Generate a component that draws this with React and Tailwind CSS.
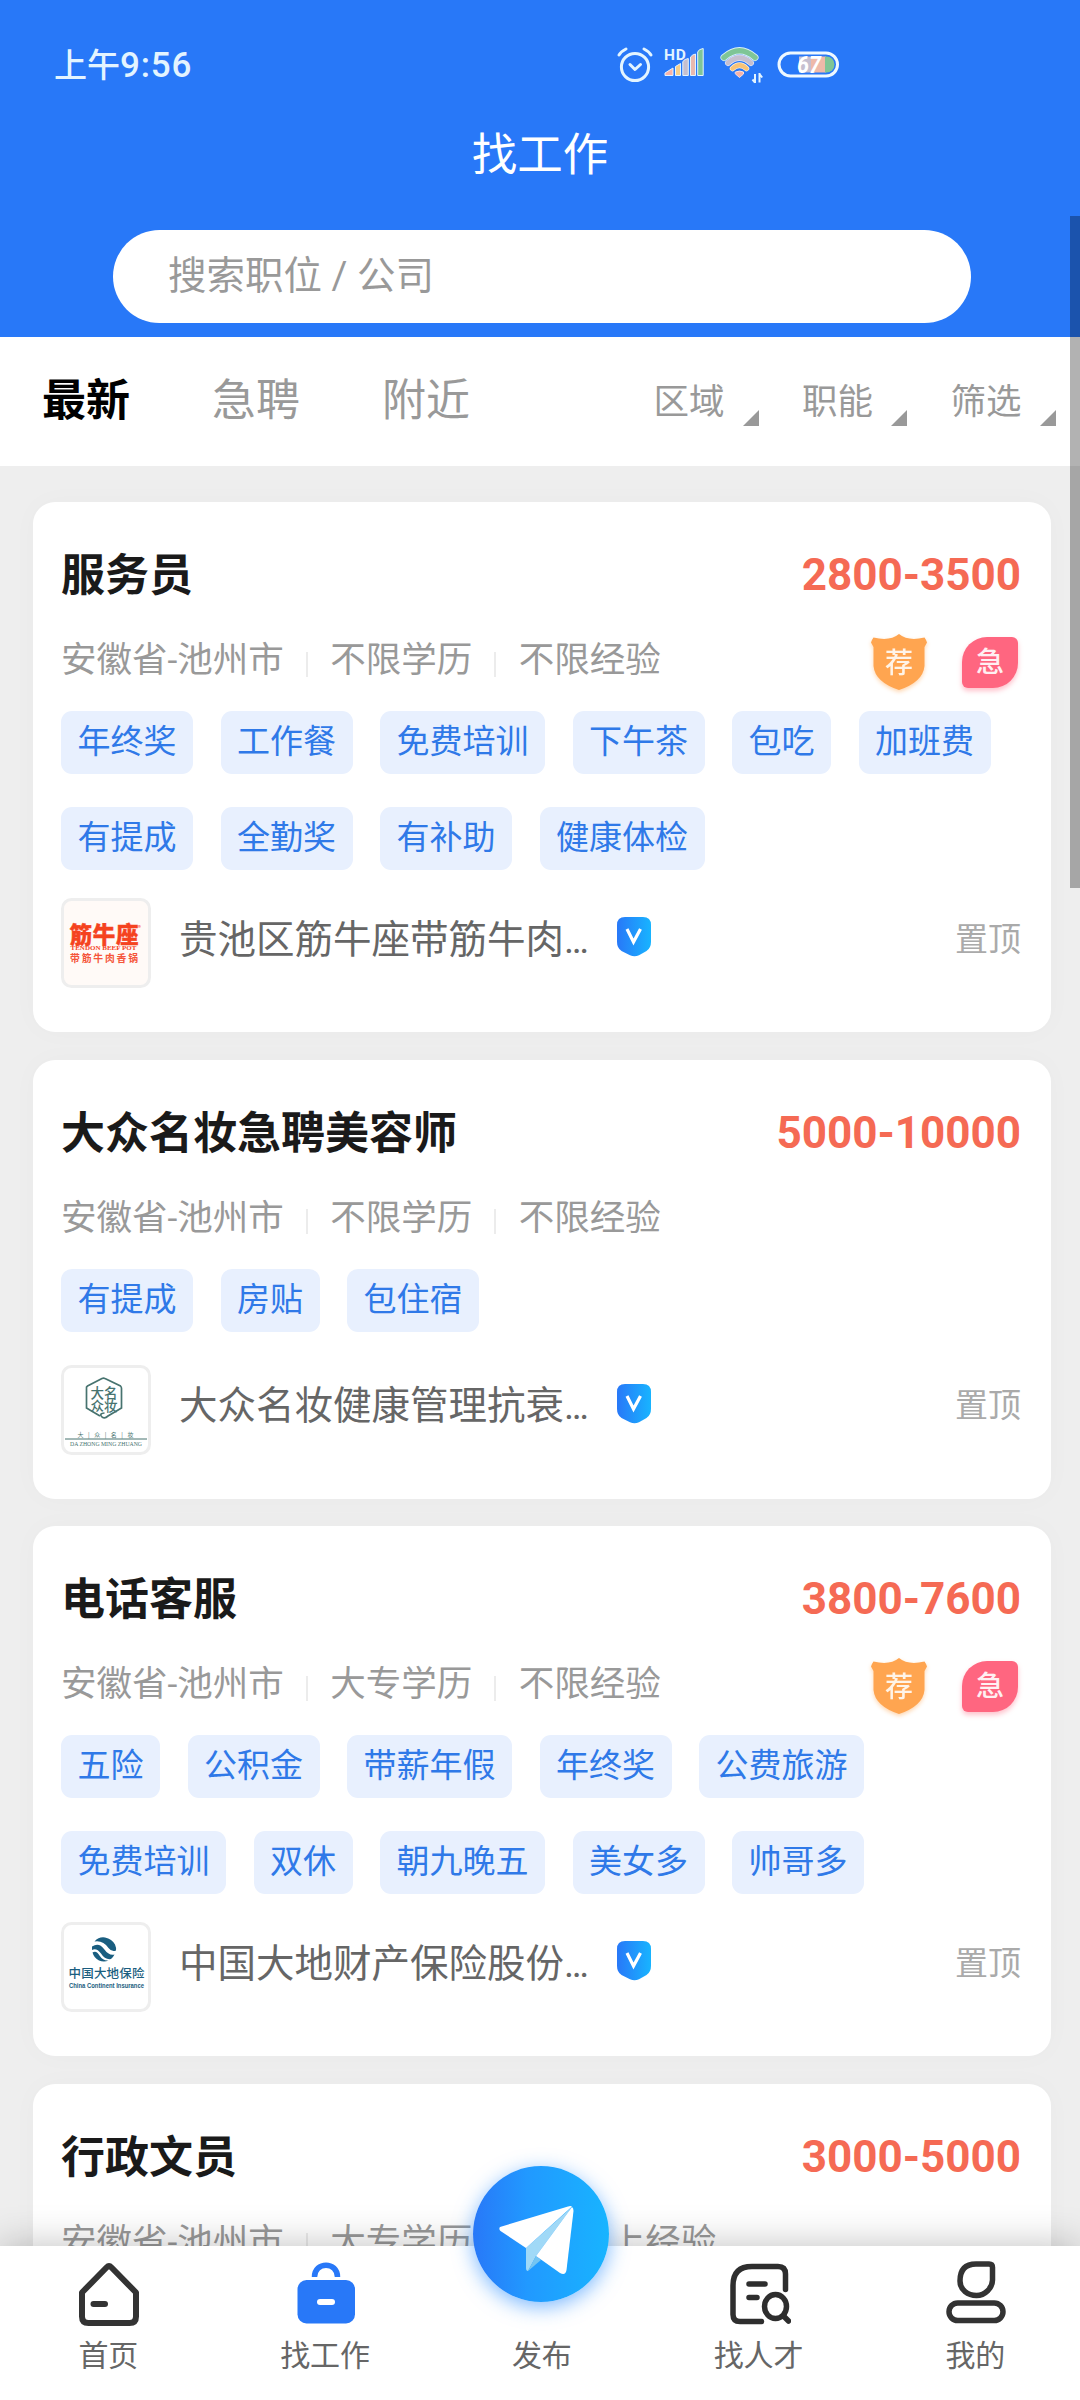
import React, { useState } from 'react';

const jobs = [
  {
    title: '服务员',
    salary: '2800-3500',
    meta: ['安徽省-池州市', '不限学历', '不限经验'],
    hot: true,
    tags: ['年终奖', '工作餐', '免费培训', '下午茶', '包吃', '加班费', '有提成', '全勤奖', '有补助', '健康体检'],
    company: '贵池区筋牛座带筋牛肉',
    logo: 'beef',
  },
  {
    title: '大众名妆急聘美容师',
    salary: '5000-10000',
    meta: ['安徽省-池州市', '不限学历', '不限经验'],
    hot: false,
    tags: ['有提成', '房贴', '包住宿'],
    company: '大众名妆健康管理抗衰',
    logo: 'beauty',
  },
  {
    title: '电话客服',
    salary: '3800-7600',
    meta: ['安徽省-池州市', '大专学历', '不限经验'],
    hot: true,
    tags: ['五险', '公积金', '带薪年假', '年终奖', '公费旅游', '免费培训', '双休', '朝九晚五', '美女多', '帅哥多'],
    company: '中国大地财产保险股份',
    logo: 'insurance',
  },
  {
    title: '行政文员',
    salary: '3000-5000',
    meta: ['安徽省-池州市', '大专学历', '1年以上经验'],
    hot: false,
    tags: [],
    company: '',
    logo: '',
  },
];

function StatusIcons() {
  return (
    <svg width="224" height="40" viewBox="0 0 224 40" fill="none">
      {/* alarm */}
      <g stroke="#e3f4ff" strokeWidth="3" strokeLinecap="round" strokeLinejoin="round">
        <circle cx="19" cy="22" r="13.6" />
        <path d="M14 19.500l5 5 5.500-5" />
        <path d="M3 10Q5 6.500 10 4M35 10Q33 6.500 28 4" />
      </g>
      {/* signal */}
      <g stroke="#e3f4ff" strokeWidth="1">
        <path d="M49 30.500v-2.500l8-5v7.500z" fill="#f9b3a8" />
        <path d="M59.500 30.500v-9l5-3v12z" fill="#f7cf8b" />
        <path d="M66.800 30.500v-14q2-2.500 5.500-3v17z" fill="#c6bfcf" />
        <path d="M74.500 30.500V12q2-2.500 5-3v21.500z" fill="#e9b9ae" />
        <path d="M81.700 30.500V7q1-3 5.500-3.500v27z" fill="#7fc596" />
      </g>
      <text x="48" y="15" fontSize="15.500" fontWeight="700" letterSpacing=".8" fill="#e3f4ff" className="font-[Roboto]">HD</text>
      {/* wifi */}
      <g strokeLinecap="round">
        <path d="M108 12.500Q123.500 -1 139 12.500" stroke="#d9f1f5" strokeWidth="7" />
        <path d="M108 12.500Q123.500 -1 139 12.500" stroke="#7fc596" strokeWidth="5.500" />
        <path d="M112 18Q123.500 7.500 135 18" stroke="#dfe6fa" strokeWidth="6" />
        <path d="M112 18Q123.500 7.500 135 18" stroke="#c6bfcf" strokeWidth="4.800" />
        <path d="M116.500 23.500Q123.500 17 130.500 23.500" stroke="#fff0d8" strokeWidth="5.500" />
        <path d="M116.500 23.500Q123.500 17 130.500 23.500" stroke="#f9c377" strokeWidth="4.200" />
        <path d="M119.500 27q4-2 8 0v2l-4 3.500-4-3.500z" fill="#f9b3a8" stroke="#fde3df" strokeWidth="1" />
      </g>
      <path d="M139.500 29.500v9M139.500 38l-2.500-3M144 38v-9.500M144 29.500l2.700 3.500" stroke="#e3f4ff" strokeWidth="2" transform="translate(-.5 -.5)" />
      {/* battery */}
      <rect x="163" y="8" width="58.500" height="23" rx="11.500" stroke="#eef8ff" strokeWidth="3" />
      <path d="M183 11.500h16v16h-16z" fill="#c6bfcf" />
      <path d="M195 11.500h15v16h-15z" fill="#eeb9a9" />
      <path d="M209 11.500h1.500a8 8 0 0 1 0 16H209z" fill="#7fc596" />
      <text x="181" y="27.500" fontSize="23" fontWeight="700" fontStyle="italic" fill="#fff" className="font-[Roboto]" textLength="24" lengthAdjust="spacingAndGlyphs">67</text>
    </svg>
  );
}

function RecommendBadge() {
  return (
    <svg width="64" height="64" viewBox="0 0 64 64" className="drop-shadow-[0_2px_2px_rgba(255,163,77,0.45)]">
      <path d="M32 4Q41 11.500 57.500 7.500Q59 9.500 60 12.500L57.500 17V36Q56 52 32 60Q8 52 6.500 36V17L4 12.500Q5 9.500 6.500 7.500Q23 11.500 32 4Z" fill="#ffa550" />
      <text x="32" y="43" textAnchor="middle" fontSize="28" fontWeight="500" fill="#fff4e8" className="font-['Noto_Sans_CJK_SC']">荐</text>
    </svg>
  );
}

function VerifyBadge() {
  return (
    <svg width="35" height="40" viewBox="0 0 35 40">
      <defs>
        <linearGradient id="verify" x1="0" y1="0" x2="1" y2="0">
          <stop offset="0" stopColor="#2878f8" />
          <stop offset="1" stopColor="#18b4ff" />
        </linearGradient>
      </defs>
      <path d="M8 0h18Q34 0 34 8v17q0 6-4.500 9l-7.500 4.200q-4.500 2-9 0L4.500 34Q0 31 0 25V8Q0 0 8 0Z" fill="url(#verify)" />
      <path d="M10 12l6.500 13L23.500 12" fill="none" stroke="#fff" strokeWidth="3.200" />
    </svg>
  );
}

function Logo({ name }) {
  if (name === 'beef') {
    return (
      <svg width="90" height="90" viewBox="0 0 90 90" className="block font-['Noto_Sans_CJK_SC']">
        <rect x="1.500" y="1.500" width="87" height="87" rx="9" fill="#fffaf7" stroke="#eee" strokeWidth="3" />
        <text x="8.500" y="44.500" fontSize="22.500" fontWeight="900" fill="#f5431f" stroke="#f5431f" strokeWidth=".4" textLength="69">筋牛座</text>
        <text x="77" y="32" fontSize="6" fill="#f5431f">®</text>
        <text x="9.500" y="52.300" fontSize="5.600" fontWeight="700" fill="#f5431f" textLength="66" lengthAdjust="spacingAndGlyphs" className="font-['Liberation_Serif']">TENDON BEEF POT</text>
        <text x="9" y="63.500" fontSize="9.800" fontWeight="700" fill="#f5553a" textLength="68">带筋牛肉香锅</text>
      </svg>
    );
  }
  if (name === 'beauty') {
    return (
      <svg width="90" height="90" viewBox="0 0 90 90" className="block font-['Noto_Sans_CJK_SC']" fill="#47736f">
        <rect x="1.500" y="1.500" width="87" height="87" rx="9" fill="#fff" stroke="#eee" strokeWidth="3" />
        <path d="M39 51L25.500 43V23.500Q25 22 26.500 21L41 13.500Q42.500 12.700 44 13.500L59.500 21Q60.500 22 60.500 23.500V43L47 51Q43 54.500 40.500 51.500T43.500 48" fill="none" stroke="#47736f" strokeWidth="1.700" />
        <g fontSize="13.500" fontWeight="500">
          <text x="29.500" y="33">大</text>
          <text x="43" y="33">名</text>
          <text x="29.500" y="46">众</text>
          <text x="43" y="46">妆</text>
        </g>
        <text x="16.500" y="71.500" fontSize="6" textLength="56">大|众|名|妆</text>
        <path d="M4 74h82" stroke="#47736f" strokeWidth="1" />
        <text x="9" y="80.500" fontSize="5.500" textLength="72" lengthAdjust="spacingAndGlyphs" className="font-['Liberation_Serif']">DA ZHONG MING ZHUANG</text>
      </svg>
    );
  }
  return (
    <svg width="90" height="90" viewBox="0 0 90 90" className="block font-['Noto_Sans_CJK_SC']" fill="#1a5e80">
      <rect x="1.500" y="1.500" width="87" height="87" rx="9" fill="#fff" stroke="#eee" strokeWidth="3" />
      <path d="M33.500 19.500Q38 14.500 44 15.500Q51 17 54 22.500Q55.500 26 55 28.500Q51 30.500 47.500 26Q42 18 33.500 19.500Z" />
      <path d="M31 24.500Q38 20 43 27Q48 34 53.500 32.500Q52 35.500 50 37Q44 38 40 31.500Q35.500 25.500 31 28Z" />
      <path d="M31.500 30.500Q35.500 28 38.500 33.500Q42 39 47.500 38.500Q43 40.500 38 38.500Q33 36 31.500 30.500Z" />
      <text x="7.500" y="56" fontSize="12.500" fontWeight="500" textLength="76">中国大地保险</text>
      <text x="8" y="66" fontSize="7" fontWeight="700" textLength="75" lengthAdjust="spacingAndGlyphs" className="font-['Liberation_Sans']">China Continent Insurance</text>
    </svg>
  );
}

function JobCard({ job }) {
  return (
    <div className="rounded-[22px] bg-white pt-[41px] pr-[30px] pb-[44px] pl-[28px] shadow-[0_0_28px_rgba(0,0,0,0.025)]">
      <div className="flex h-[66px] items-center justify-between">
        <h2 className="text-[44px] leading-[66px] font-bold text-[#1a1a1a]">{job.title}</h2>
        <span className="pb-[2px] text-[44px] leading-[64px] font-bold text-[#f56a54]">{job.salary}</span>
      </div>
      <div className="mt-[19px] flex h-[64px] items-center justify-between">
        <div className="flex items-center text-[35.500px] leading-[64px] text-[#999]">
          {job.meta.map((item, i) => (
            <React.Fragment key={item}>
              {i > 0 && <span className="mt-2 mr-[22.500px] ml-[22px] h-[25px] w-[2px] bg-[#ececec]" />}
              <span>{item}</span>
            </React.Fragment>
          ))}
        </div>
        {job.hot && (
          <div className="flex items-center pt-[4px]">
            <RecommendBadge />
            <span className="mr-[3px] ml-[31px] flex h-[51px] w-[56px] items-center justify-center rounded-tl-[25px] rounded-tr-[6px] rounded-br-[25px] rounded-bl-[6px] bg-[#ff6680] pt-[2px] text-[28px] font-medium text-[#fff0f2] shadow-[0_3px_5px_rgba(255,102,128,0.4)]">
              急
            </span>
          </div>
        )}
      </div>
      <div className="mt-[19px] flex min-h-[68px] flex-wrap content-start gap-x-[27.500px] gap-y-[33px]">
        {job.tags.map((tag) => (
          <span key={tag} className="h-[63px] rounded-[11px] bg-[#e8f0fe] px-[16.500px] text-[33px] leading-[61px] text-[#2f79e8]">
            {tag}
          </span>
        ))}
      </div>
      {job.company && (
        <div className="mt-[28px] flex h-[90px] items-center">
          <Logo name={job.logo} />
          <span className="mb-[7px] ml-[28px] w-[438px] text-[38.500px] leading-[82px] whitespace-nowrap text-[#666]">
            {job.company}
            <span className="tracking-[-2.500px]">...</span>
          </span>
          <span className="mb-[12px] shrink-0">
            <VerifyBadge />
          </span>
          <span className="mb-[7px] ml-auto text-[33px] text-[#aaa]">置顶</span>
        </div>
      )}
    </div>
  );
}

function HomeIcon() {
  return (
    <svg width="64" height="64" viewBox="0 0 64 64" fill="none" stroke="#333" strokeWidth="6" strokeLinecap="round" strokeLinejoin="round">
      <path d="M6 30.500L30.500 5.500Q33 3 35.500 5.500L60 30.500V54.500Q60 61 53.500 61H12.500Q6 61 6 54.500Z" />
      <path d="M17.500 42H29" />
    </svg>
  );
}

function BagIcon() {
  return (
    <svg width="64" height="64" viewBox="0 0 64 64" fill="none">
      <rect x="4.500" y="18" width="57.500" height="43.500" rx="9" fill="#2878f8" />
      <path d="M21.500 15C21.500 -.8 44.500 -.8 44.500 15" stroke="#2878f8" strokeWidth="5.500" />
      <path d="M27 40H39" stroke="#fff" strokeWidth="6" strokeLinecap="round" />
    </svg>
  );
}

function TalentIcon() {
  return (
    <svg width="64" height="64" viewBox="0 0 64 64" fill="none" stroke="#2e2e2e" strokeWidth="5.500" strokeLinecap="round" strokeLinejoin="round">
      <path d="M58.500 27.500V12Q58.500 4.500 51 4.500H25Q6 4.500 6 23.500V52.500Q6 59.500 13 59.500H34.500" />
      <path d="M22 22H38M22 35.500H30" />
      <ellipse cx="48.500" cy="44.500" rx="11" ry="12" />
      <path d="M57 54.500L61.500 59" />
    </svg>
  );
}

function MineIcon() {
  return (
    <svg width="64" height="64" viewBox="0 0 64 64" fill="none" stroke="#333" strokeWidth="5.500" strokeLinejoin="round" className="overflow-visible">
      <path d="M33 2H46Q49.500 2 49.500 5.500V18C49.500 26 42 33.500 33.500 33.500S17 28 17 19Q17 2 33 2Z" />
      <rect x="6" y="41" width="54" height="17.500" rx="8.700" />
    </svg>
  );
}

function SendIcon() {
  return (
    <svg width="136" height="136" viewBox="0 0 136 136" className="block">
      <defs>
        <linearGradient id="send" x1="0" y1="0" x2="1" y2="0">
          <stop offset="0" stopColor="#2878f8" />
          <stop offset=".4" stopColor="#2199ff" />
          <stop offset="1" stopColor="#18b4ff" />
        </linearGradient>
      </defs>
      <circle cx="68" cy="68" r="68" fill="url(#send)" />
      <path d="M53 82L99 41L63 90L55 105Q53 105 53 102Z" fill="#a0d9f7" />
      <path d="M55 105L63 90L68 94Z" fill="#74c5f2" />
      <path d="M27 61Q25.500 63 27.500 65L53 82L99 40.500Q97.500 39.500 95 40.500Z" fill="#fff" />
      <path d="M99 41L63 90L87 107Q92.500 110 93.500 104L100.500 45Q100.500 42 99 41Z" fill="#fff" />
    </svg>
  );
}

const navItems = [
  { label: '首页', icon: <HomeIcon /> },
  { label: '找工作', icon: <BagIcon /> },
  { label: '发布', icon: null },
  { label: '找人才', icon: <TalentIcon /> },
  { label: '我的', icon: <MineIcon /> },
];

function App() {
  const [tab, setTab] = useState('最新');

  return (
    <div className="relative h-[2400px] w-[1080px] overflow-hidden bg-[#eee] font-[Roboto,'Noto_Sans_CJK_SC',sans-serif]">
      <header className="h-[337px] bg-[#2878f8]">
        <div className="flex h-[110px] items-center pt-5 pl-[54px]">
          <span className="w-[562px] pt-[2px] text-[33px] font-medium text-[#e3f4ff]">
            上午<span className="text-[35px] tracking-[0.800px]">9:56</span>
          </span>
          <StatusIcons />
        </div>
        <h1 className="h-[88px] pt-[2px] text-center text-[45.500px] leading-[88px] text-white">找工作</h1>
        <div className="mt-[32px] ml-[113px] h-[93px] w-[858px] rounded-full bg-white pl-[55px] text-[38.500px] leading-[91px] text-[#999]">
          搜索职位 / 公司
        </div>
      </header>

      <div className="flex h-[129px] items-center bg-white pr-[24px] pl-[42px]">
        <div className="flex gap-[82px] pb-[2px] text-[44px]">
          {['最新', '急聘', '附近'].map((name) => (
            <button key={name} onClick={() => setTab(name)} className={name === tab ? 'font-bold text-black' : 'text-[#999]'}>
              {name}
            </button>
          ))}
        </div>
        <div className="ml-auto flex gap-[43px] text-[35.500px] text-[#999]">
          {['区域', '职能', '筛选'].map((name) => (
            <div key={name} className="flex items-end">
              <span className="leading-[54px]">{name}</span>
              <svg width="16" height="16" viewBox="0 0 16 16" className="mb-[3px] ml-[18.500px]">
                <path d="M16 0V16H0Z" fill="#999" />
              </svg>
            </div>
          ))}
        </div>
      </div>

      <main className="flex flex-col gap-[27.600px] pt-[36px] pr-[29px] pl-[33px]">
        {jobs.map((job) => (
          <JobCard key={job.title} job={job} />
        ))}
      </main>

      {/* scroll indicator */}
      <div className="absolute top-[216px] right-0 h-[672px] w-[10px] bg-black/30" />

      <nav className="absolute bottom-0 left-0 flex h-[154px] w-full bg-white shadow-[0_0_36px_rgba(0,0,0,0.25)]">
        {navItems.map((item) => (
          <div key={item.label} className="flex w-[216.750px] shrink-0 flex-col items-center pt-[16px]">
            <div className="h-[64px]">{item.icon}</div>
            <span className="mt-[8px] text-[30px] leading-[44px] text-[#666]">{item.label}</span>
          </div>
        ))}
        <div className="absolute -top-[80px] left-[473px] rounded-full shadow-[0_5px_20px_rgba(40,140,255,0.6)]">
          <SendIcon />
        </div>
      </nav>
    </div>
  );
}

export default App;
